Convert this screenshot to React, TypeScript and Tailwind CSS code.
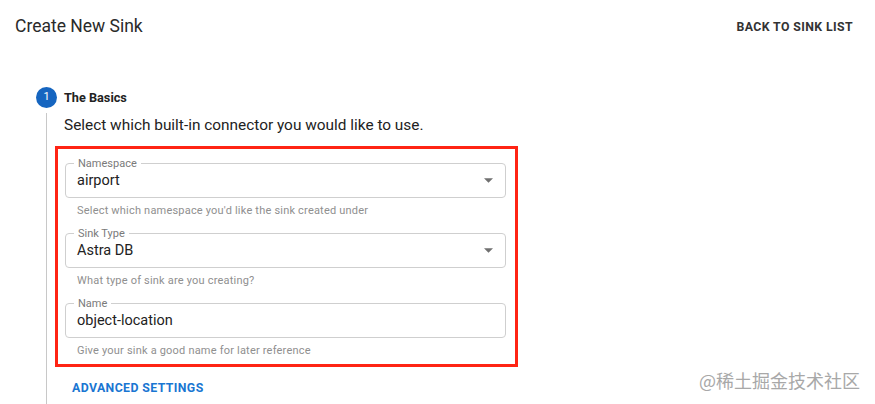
import type { ReactNode } from 'react'

const fieldCls = 'relative flex items-center h-[35px] border border-[#cfcfcf] rounded-[4px] pl-[11px] pr-[12px]'

function ArrowDropDown() {
  return (
    <svg className="ml-auto w-[9px] h-[5px] text-[#707070]" viewBox="0 0 10 5" fill="currentColor">
      <path d="M0 0l5 5 5-5z" />
    </svg>
  )
}

function OutlinedField({ label, value, helper, select }: { label: string; value: string; helper: string; select?: boolean }) {
  return (
    <div>
      <div className={fieldCls}>
        <span className="absolute top-[-7px] left-[8px] px-[4px] bg-white text-[11px] leading-[13px] text-[#7a7a7a]">
          {label}
        </span>
        <span className="text-[14.5px] leading-[20px] text-[#222]">{value}</span>
        {select && <ArrowDropDown />}
      </div>
      <p className="mt-[6px] pl-[12px] text-[11px] leading-[13px] text-[#8f8f8f] tracking-[0.2px]">{helper}</p>
    </div>
  )
}

function StepBadge({ children }: { children: ReactNode }) {
  return (
    <div className="w-[21px] h-[21px] rounded-full bg-[#1565c0] text-white text-[11px] flex items-center justify-center">
      {children}
    </div>
  )
}

export default function App() {
  return (
    <div className="relative w-[875px] h-[404px] bg-white overflow-hidden font-['Roboto','Liberation_Sans',sans-serif]">

      {/* header */}
      <div className="flex justify-between items-start pl-[15px] pr-[22px] h-[36px]">
        <h1 className="mt-[15px] text-[17.5px] leading-[22px] text-[#2a2a2a]">Create New Sink</h1>
        <button className="mt-[19px] text-[12.3px] leading-[16px] font-bold tracking-[0.4px] text-[#333]">
          BACK TO SINK LIST
        </button>
      </div>

      {/* step 1 */}
      <div className="pl-[36px] mt-[51px]">
        <div className="flex items-center gap-[7px]">
          <StepBadge>1</StepBadge>
          <span className="text-[12.7px] leading-[16px] font-bold text-[#222]">The Basics</span>
        </div>

        <div className="ml-[10px] mt-[5px] border-l border-[#c8c8c8] pl-[17px] h-[300px]">
          <p className="pt-[2px] text-[15.4px] leading-[20px] text-[#222]">
            Select which built-in connector you would like to use.
          </p>

          <div className="mt-[11px] ml-[-9px] w-[463px] border-[3px] border-[#ff2414] pt-[14px] pb-[7px] pl-[7px] pr-[9px] flex flex-col gap-[16px]">
            <OutlinedField label="Namespace" value="airport" helper="Select which namespace you'd like the sink created under" select />
            <OutlinedField label="Sink Type" value="Astra DB" helper="What type of sink are you creating?" select />
            <OutlinedField label="Name" value="object-location" helper="Give your sink a good name for later reference" />
          </div>

          <button className="mt-[13px] ml-[8px] text-[12.3px] leading-[16px] font-bold tracking-[0.4px] text-[#1976d2]">
            ADVANCED SETTINGS
          </button>
        </div>
      </div>

      <span className="absolute right-[15px] bottom-[13px] text-[18px] leading-[22px] text-[#a8a8a8] font-['Noto_Sans_CJK_SC',sans-serif]">
        @稀土掘金技术社区
      </span>
    </div>
  )
}
